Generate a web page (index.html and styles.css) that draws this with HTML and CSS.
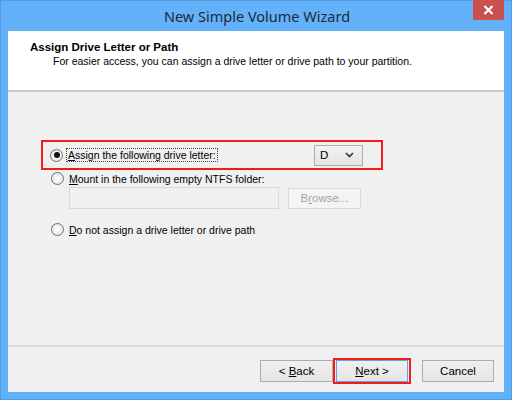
FILE: index.html
```html
<!DOCTYPE html>
<html>
<head>
<meta charset="utf-8">
<link rel="stylesheet" href="styles.css">
</head>
<body>
<div class="window">
  <div class="titlebar">
    <div class="title">New Simple Volume Wizard</div>
    <div class="close"><svg width="11" height="10" viewBox="0 0 11 10"><path d="M1.5 1 L9.5 9 M9.5 1 L1.5 9" stroke="#fff" stroke-width="2.2" fill="none"/></svg></div>
  </div>
  <div class="client">
    <div class="header">
      <div class="h-title">Assign Drive Letter or Path</div>
      <div class="h-sub">For easier access, you can assign a drive letter or drive path to your partition.</div>
    </div>
    <div class="content">
      <div class="row row-assign">
        <span class="radio checked"></span>
        <span class="label focus"><u>A</u>ssign the following drive letter:</span>
        <div class="combo"><span>D</span><svg width="9" height="6" viewBox="0 0 9 6"><path d="M1 1 L4.5 4.5 L8 1" stroke="#333" stroke-width="1.6" fill="none"/></svg></div>
      </div>
      <div class="row row-mount">
        <span class="radio"></span>
        <span class="label"><u>M</u>ount in the following empty NTFS folder:</span>
      </div>
      <div class="row row-folder">
        <div class="textbox"></div>
        <div class="btn disabled"><span>B<u>r</u>owse...</span></div>
      </div>
      <div class="row row-none">
        <span class="radio"></span>
        <span class="label"><u>D</u>o not assign a drive letter or drive path</span>
      </div>
    </div>
    <div class="footer">
      <div class="btn back"><span>&lt; <u>B</u>ack</span></div>
      <div class="next-wrap"><div class="btn next"><span><u>N</u>ext &gt;</span></div></div>
      <div class="btn cancel"><span>Cancel</span></div>
    </div>
  </div>
</div>
</body>
</html>
```
FILE: styles.css
```css
html, body { margin: 0; padding: 0; background: #fff; }
.window {
  width: 512px; height: 400px; box-sizing: border-box;
  background: #63b1f8; border: 1px solid #4f9de6;
  display: flex; flex-direction: column;
  font-family: "Liberation Sans", Arial, sans-serif; font-size: 10.5px; color: #000;
}
.titlebar { height: 30px; position: relative; display: flex; justify-content: center; }
.title {
  font-family: "Noto Sans", "Open Sans", sans-serif; font-size: 14.5px; color: #1e2b38;
  margin-top: 5px; margin-left: 2px;
}
.close {
  position: absolute; top: -1px; right: 7px; width: 31px; height: 20px;
  background: #c9504f; display: flex; align-items: center; justify-content: center;
}
.client {
  margin: 0 7px 7px 7px; flex: 1; background: #f0f0f0;
  display: flex; flex-direction: column;
}
.header {
  background: #fff; border-bottom: 2px solid #c9c9c9; box-sizing: border-box;
  height: 61px; padding: 10px 0 0 22px;
}
.h-title { font-weight: bold; font-size: 11.5px; }
.h-sub { margin: 2px 0 0 23px; font-size: 10.5px; }
.content { flex: 1; padding: 48px 0 0 33px; border-bottom: 2px solid #dcdcdc; }
.row { display: flex; align-items: center; }
.row-assign {
  width: 342px; height: 30px; box-sizing: border-box; border: 2px solid #f21b1b;
  padding-left: 7px; padding-right: 18px;
}
.radio {
  width: 11px; height: 11px; border-radius: 50%; border: 1px solid #6e6e6e;
  background: radial-gradient(circle, #fff 0%, #e2e2e2 100%); position: relative; flex: none;
}
.radio.checked::after {
  content: ""; position: absolute; left: 2.5px; top: 2.5px; width: 6px; height: 6px;
  border-radius: 50%; background: #111;
}
.label { margin-left: 4px; padding: 0 1px; }
.label.focus { outline: 1px dotted #444; }
.combo {
  margin-left: auto; width: 49px; height: 21px; box-sizing: border-box;
  border: 1px solid #acacac; background: linear-gradient(#f2f2f2, #e4e4e4);
  display: flex; align-items: center; justify-content: space-between; padding: 0 8px 0 5px;
  font-size: 11.5px;
}
.row-mount { margin: 0 0 0 10px; height: 17px; }
.row-folder { margin: 0 0 0 28px; }
.textbox { width: 210px; height: 22px; box-sizing: border-box; border: 1px solid #d9d9d9; background: #f0f0f0; }
.btn {
  height: 22px; box-sizing: border-box; border: 1px solid #adadad;
  background: linear-gradient(#f0f0f0, #e5e5e5);
  display: flex; align-items: center; justify-content: center; font-size: 11.5px; color: #000;
}
.btn.disabled { margin-left: 9px; width: 73px; height: 21px; border-color: #d9d9d9; color: #a3a3a3; background: #f4f4f4; }
.row-none { margin: 12px 0 0 10px; height: 17px; }
.footer { height: 45px; display: flex; align-items: center; padding-left: 252px; padding-top: 3px; box-sizing: border-box; }
.back { width: 73px; }
.next-wrap { border: 2px solid #f21b1b; padding: 0 1px; }
.next { width: 72px; border-color: #5da2e8; }
.cancel { width: 72px; margin-left: 11px; }
```
